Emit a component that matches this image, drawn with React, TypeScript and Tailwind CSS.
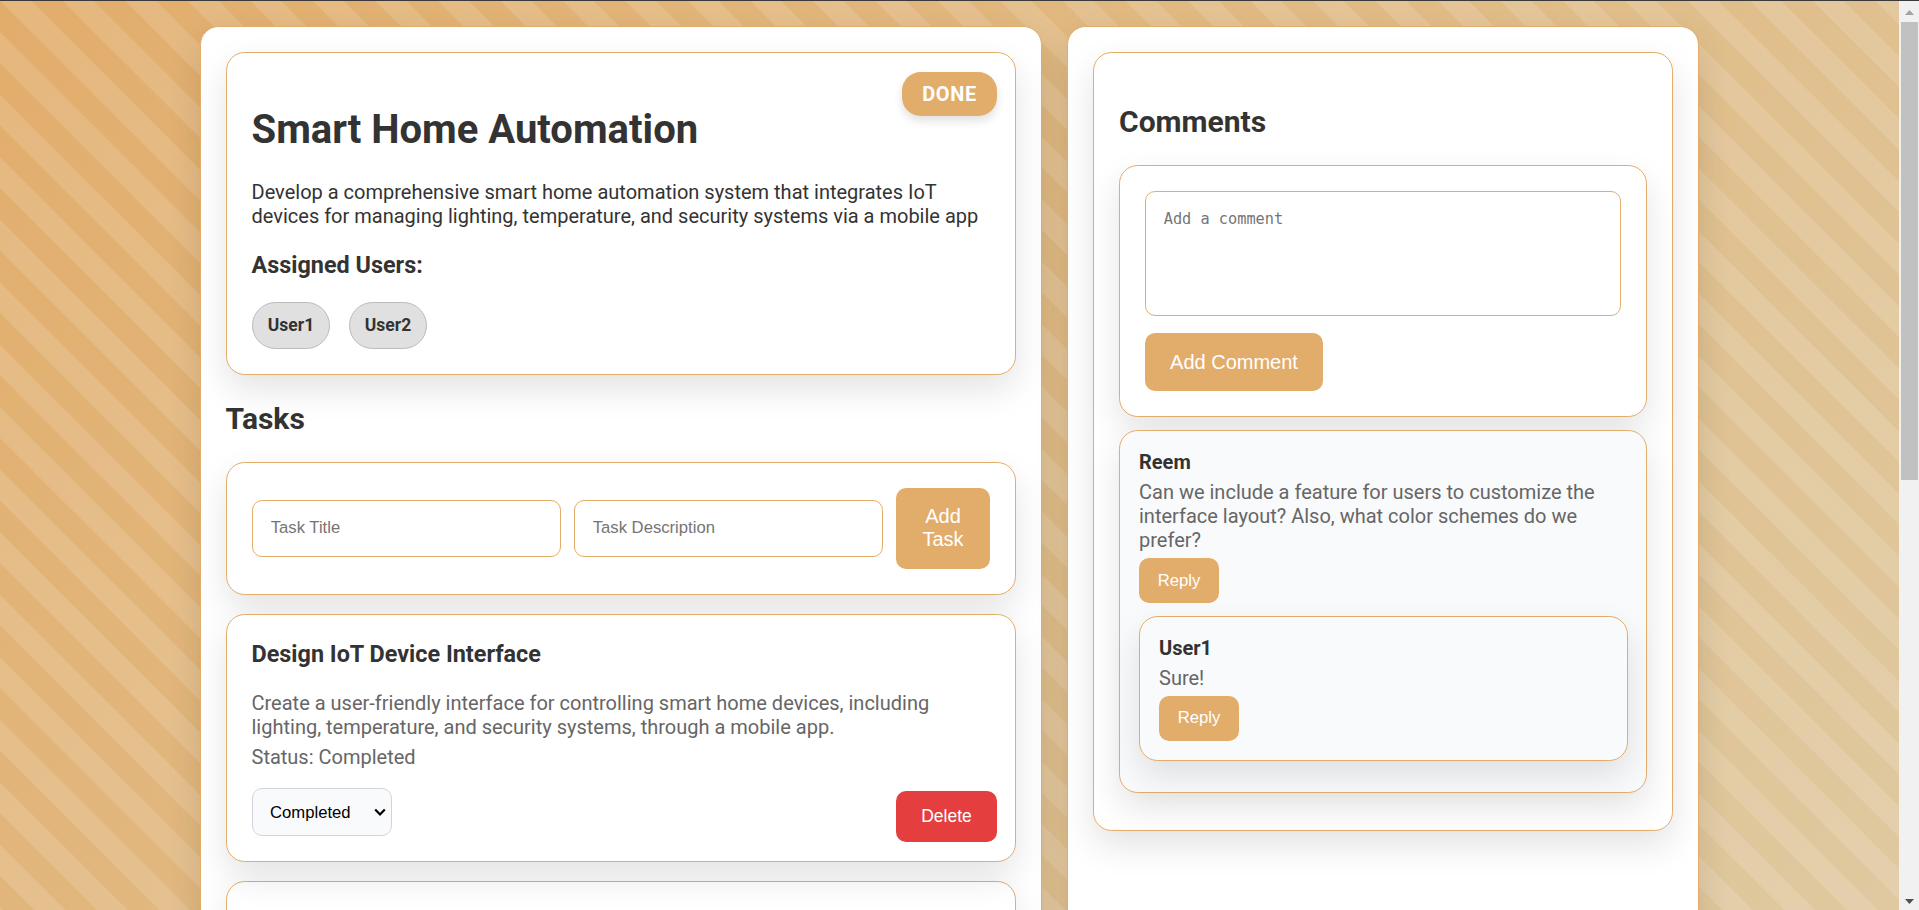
import type { ReactNode } from "react";

const SHADOW = "shadow-[0_15px_35px_rgba(0,0,0,0.11)]";
const CARD = "rounded-[18.75px] border border-[#e2ad6b] " + SHADOW;

function Heading({ children, className = "" }: { children: ReactNode; className?: string }) {
  return <h2 className={`text-[30px] leading-[35px] font-bold text-[#333] ${className}`}>{children}</h2>;
}

function Chip({ name }: { name: string }) {
  return (
    <li className="flex h-[47px] w-[78px] items-center justify-center rounded-[25px] border border-[#bbb] bg-[#e0e0e0] pb-px text-[17.5px] font-bold text-[#333]">
      {name}
    </li>
  );
}

function Field({ placeholder }: { placeholder: string }) {
  return (
    <input
      placeholder={placeholder}
      className="h-[57px] w-[309px] rounded-[10px] border border-[#e2ad6b] bg-white px-[17.75px] pb-[2px] font-['Liberation_Sans',Arial,sans-serif] text-[16.67px] placeholder:text-[#757575]"
    />
  );
}

function Comment({ author, text, children, className = "" }: { author: string; text: string; children?: ReactNode; className?: string }) {
  return (
    <article className={`${CARD} bg-[#f9fafc] px-[19px] ${className}`}>
      <h4 className="text-[20px] leading-[24px] font-bold text-[#333]">{author}</h4>
      <p className="mt-[6px] text-[20px] leading-[24px] text-[#666]">{text}</p>
      <button className="mt-[6px] block h-[45px] w-[80px] rounded-[10px] bg-[#e2ad6b] pb-px font-['Liberation_Sans',Arial,sans-serif] text-[16.67px] text-white">
        Reply
      </button>
      {children}
    </article>
  );
}

function Scrollbar() {
  return (
    <div className="flex h-full w-[20px] shrink-0 flex-col items-center justify-between border-t border-[#3a3a3a] bg-[#f1f1f1]">
      <div className="flex flex-col items-center">
        <svg width="20" height="21" viewBox="0 0 20 21">
          <path d="M10.500 9 15 14H6z" fill="#a3a3a3" />
        </svg>
        <div className="ml-px h-[458px] w-[17px] bg-[#c1c1c1]" />
      </div>
      <svg width="20" height="21" viewBox="0 0 20 21">
        <path d="M6 10h9l-4.500 5z" fill="#505050" />
      </svg>
    </div>
  );
}

export default function App() {
  return (
    <div className="flex h-[910px] w-[1919px] overflow-hidden bg-[#3a3a3a] font-['Roboto',sans-serif] text-[#333]">
      <div className="mt-px flex h-[909px] w-[1899px] shrink-0 items-start gap-[25px] overflow-hidden bg-[linear-gradient(45deg,rgba(255,255,255,0.13)_25%,transparent_25%,transparent_50%,rgba(255,255,255,0.13)_50%,rgba(255,255,255,0.13)_75%,transparent_75%),linear-gradient(135deg,#e2ad6b,#dfc9a0)] bg-[size:62.5px_62.5px,100%_100%] pt-[25px] pl-[200px]">
        <section className={`${CARD} h-[1200px] w-[842px] bg-white p-[25px]`}>
          <div className={`${CARD} relative h-[323px] w-[790px] bg-white pt-[53px] pr-[25px] pl-[24.5px]`}>
            <span className="absolute top-[19px] right-[18px] flex h-[44px] w-[95px] items-center justify-center rounded-[18.75px] bg-[#e2ad6b] text-[20px] font-bold tracking-[0.625px] text-white shadow-[0_5px_10px_rgba(0,0,0,0.12)]">
              DONE
            </span>
            <h1 className="text-[40px] leading-[47px] font-bold">Smart Home Automation</h1>
            <p className="mt-[27px] text-[20px] leading-[24px]">
              Develop a comprehensive smart home automation system that integrates IoT devices for managing lighting, temperature, and security systems via a mobile app
            </p>
            <h3 className="mt-[24px] text-[23.4px] leading-[27px] font-bold">Assigned Users:</h3>
            <ul className="mt-[23px] ml-[0.5px] flex gap-[19px]">
              <Chip name="User1" />
              <Chip name="User2" />
            </ul>
          </div>

          <Heading className="mt-[26px] -ml-[0.5px]">Tasks</Heading>

          <form className={`${CARD} mt-[26px] flex h-[133px] w-[790px] items-center gap-[13px] bg-white px-[25px]`}>
            <Field placeholder="Task Title" />
            <Field placeholder="Task Description" />
            <button className="h-[81px] w-[94px] rounded-[10px] bg-[#e2ad6b] px-[25px] pb-[2px] font-['Liberation_Sans',Arial,sans-serif] text-[20px] leading-[23px] text-white">
              Add Task
            </button>
          </form>

          <article className={`${CARD} relative mt-[19px] h-[248px] w-[790px] bg-white pt-[25px] pr-[25px] pl-[24.5px]`}>
            <h3 className="text-[23.4px] leading-[28px] font-bold">Design IoT Device Interface</h3>
            <p className="mt-[23px] text-[20px] leading-[24px] text-[#666]">
              Create a user-friendly interface for controlling smart home devices, including lighting, temperature, and security systems, through a mobile app.
            </p>
            <p className="mt-[6px] text-[20px] leading-[24px] text-[#666]">Status: Completed</p>
            <div className="mt-[19px] ml-[0.5px] flex h-[48px] w-[140px] items-center justify-between rounded-[10px] border border-[#d1d5db] bg-[#f9fafc] pr-[5px] pl-[17px] font-['Liberation_Sans',Arial,sans-serif] text-[16.67px] text-black">
              Completed
              <svg width="12" height="9" viewBox="0 0 12 9" fill="none" stroke="#000" strokeWidth="2.200">
                <path d="M1.200 1.500 6 6.500l4.800-5" />
              </svg>
            </div>
            <button className="absolute right-[18px] bottom-[19px] h-[51px] w-[101px] rounded-[10px] bg-[#e53e3e] font-['Liberation_Sans',Arial,sans-serif] text-[17.5px] text-white">
              Delete
            </button>
          </article>

          <article className={`${CARD} mt-[19px] h-[248px] w-[790px] bg-white`} />
        </section>

        <section className={`${CARD} h-[1200px] w-[632px] bg-white p-[25px]`}>
          <div className={`${CARD} h-[779px] w-[580px] bg-white px-[25px] pt-[51px]`}>
            <Heading>Comments</Heading>
            <form className={`${CARD} mt-[26px] h-[252px] bg-white p-[25px]`}>
              <textarea
                placeholder="Add a comment"
                className="block h-[125px] w-full resize-none rounded-[10px] border border-[#e2ad6b] bg-white px-[17.75px] py-[17px] font-['DejaVu_Sans_Mono',monospace] text-[15.25px] leading-[20px] placeholder:text-[#757575]"
              />
              <button className="mt-[17px] h-[58px] w-[178px] rounded-[10px] bg-[#e2ad6b] font-['Liberation_Sans',Arial,sans-serif] text-[20px] text-white">
                Add Comment
              </button>
            </form>
            <Comment
              author="Reem"
              text="Can we include a feature for users to customize the interface layout? Also, what color schemes do we prefer?"
              className="mt-[13px] h-[363px] pt-[19px]"
            >
              <Comment author="User1" text="Sure!" className="-mr-px mt-[13px] h-[145px] pt-[18.5px]" />
            </Comment>
          </div>
        </section>
      </div>
      <Scrollbar />
    </div>
  );
}
